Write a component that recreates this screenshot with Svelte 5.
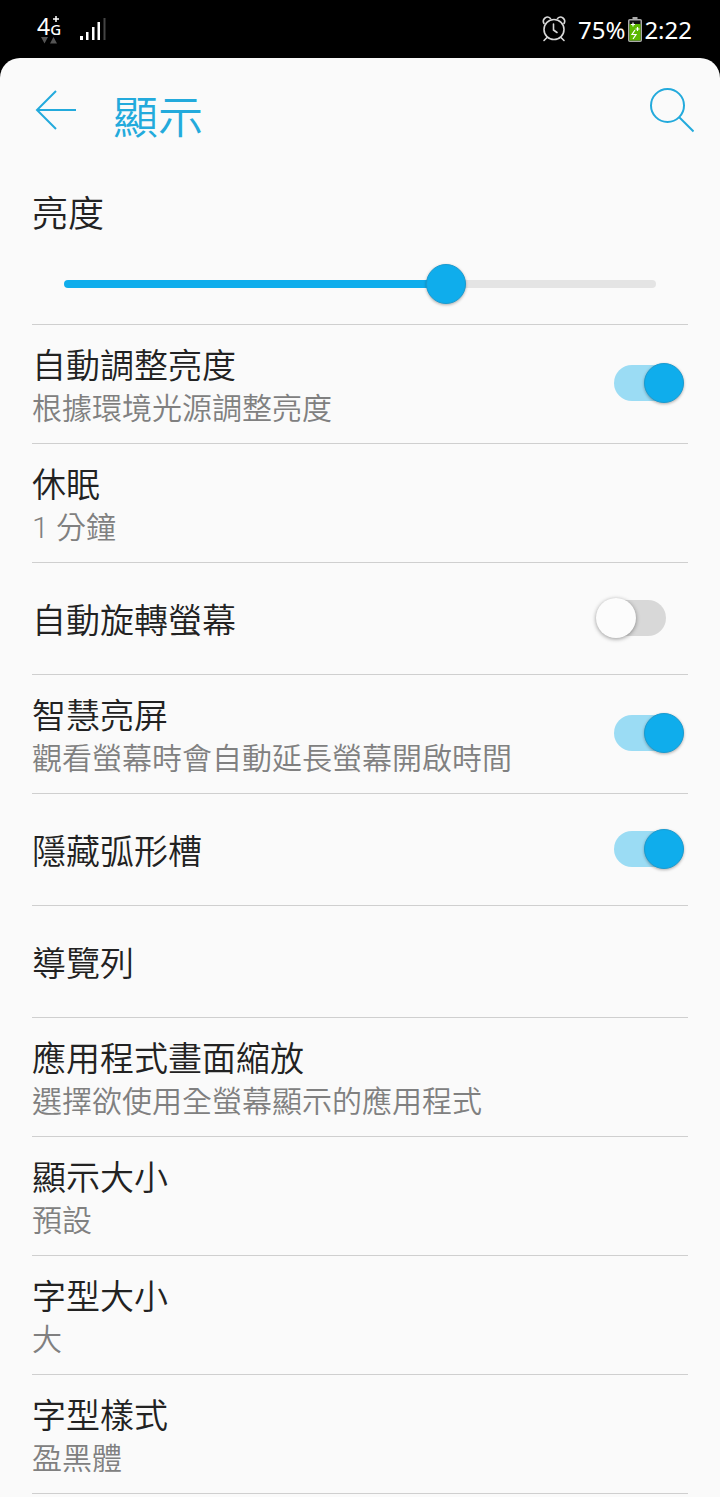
<script lang="ts">
	type Item = {
		title: string;
		sub?: string;
		on?: boolean;
	};

	const max = 255;
	let brightness = $state(167);

	let items: Item[] = $state([
		{ title: '自動調整亮度', sub: '根據環境光源調整亮度', on: true },
		{ title: '休眠', sub: '1 分鐘' },
		{ title: '自動旋轉螢幕', on: false },
		{ title: '智慧亮屏', sub: '觀看螢幕時會自動延長螢幕開啟時間', on: true },
		{ title: '隱藏弧形槽', on: true },
		{ title: '導覽列' },
		{ title: '應用程式畫面縮放', sub: '選擇欲使用全螢幕顯示的應用程式' },
		{ title: '顯示大小', sub: '預設' },
		{ title: '字型大小', sub: '大' },
		{ title: '字型樣式', sub: '盈黑體' }
	]);
</script>

{#snippet text(item: Item)}
	<span class="text">
		<span class="title">{item.title}</span>
		{#if item.sub}
			<span class="sub">{item.sub}</span>
		{/if}
	</span>
{/snippet}

<div class="screen">
	<div class="status">
		<div class="network">
			<div class="type">
				<div class="gen">
					<span>4</span>
					<div class="plus">
						<svg width="6" height="6" viewBox="0 0 6 6" stroke="#fff" stroke-width="1.500">
							<path d="M3 0v6M0 3h6" />
						</svg>
						<span>G</span>
					</div>
				</div>
				<svg width="16" height="7" viewBox="0 0 16 7" fill="#555">
					<path d="M0 0h7L3.500 6.500zM9 6.500h7L12.500 0z" />
				</svg>
			</div>
			<svg width="26" height="24" viewBox="0 0 26 24">
				<path d="M0 19h3v4H0zM6 15h2.500v8H6zM12 10h2.500v13H12zM17.500 5h2.500v18h-2.500z" fill="#fff" />
				<path d="M23.500 1h2v22h-2z" fill="#444" />
			</svg>
		</div>
		<div class="system">
			<svg class="alarm" width="24" height="26" viewBox="0 0 24 26" fill="none" stroke="#d8d8d8" stroke-width="1.600" stroke-linecap="round">
				<circle cx="12" cy="13.500" r="10" />
				<path d="M11.500 8v6l3.500 2.500M5 21.500L2 24.500M19 21.500l3 3" />
				<path d="M2 7.500C-0.500 3 5 -1 8.500 2.500M22 7.500C24.500 3 19 -1 15.500 2.500" />
			</svg>
			<span>75%</span>
			<svg class="battery" width="14" height="25" viewBox="0 0 14 25">
				<path d="M4.500 0h5v2h-5z" fill="#aaa" />
				<rect x="0.750" y="2.750" width="12.500" height="21.500" rx="1" fill="#111" stroke="#aaa" stroke-width="1.500" />
				<path d="M1.500 7h11v16.500h-11z" fill="#5cb800" />
				<path d="M3 7.500h4M5 5.500v4M7.500 12h4M9.500 10v4M7 13L4 17.500h4L5 22" fill="none" stroke="#fff" stroke-width="1.200" />
			</svg>
			<span>2:22</span>
		</div>
	</div>

	<main>
		<header>
			<button class="icon" aria-label="返回">
				<svg width="42" height="42" viewBox="0 0 42 42" fill="none" stroke="#23aadc" stroke-width="2">
					<path d="M21 2L2 21l19 19M2 21h39" />
				</svg>
			</button>
			<h1>顯示</h1>
			<button class="icon" aria-label="搜尋">
				<svg width="44" height="46" viewBox="0 0 44 46" fill="none" stroke="#23aadc" stroke-width="2">
					<circle cx="17.500" cy="18.500" r="16.500" />
					<path d="M29 30L43.500 44.500" />
				</svg>
			</button>
		</header>

		<section class="brightness">
			<label for="brightness">亮度</label>
			<input
				id="brightness"
				type="range"
				min="0"
				{max}
				bind:value={brightness}
				style="--fill: {(brightness / max) * 100}%"
			/>
		</section>

		<ul>
			{#each items as item}
				<li>
					{#if item.on !== undefined}
						<label class="row" class:single={!item.sub}>
							{@render text(item)}
							<input class="switch" type="checkbox" role="switch" bind:checked={item.on} />
						</label>
					{:else}
						<button class="row" class:single={!item.sub}>
							{@render text(item)}
						</button>
					{/if}
				</li>
			{/each}
		</ul>
	</main>
</div>

<style>
	:global(body) {
		background: #fafafa;
	}

	.screen {
		min-height: 100vh;
		background: #000;
		font-family: Roboto, 'Noto Sans CJK TC', sans-serif;
		font-weight: 350;
		color: #222;
	}

	.status {
		display: flex;
		justify-content: space-between;
		height: 58px;
		padding: 0 28px 0 37px;
		box-sizing: border-box;
		color: #fff;
		font-family: 'Noto Sans', sans-serif;
		font-weight: 400;
	}

	.network,
	.system,
	.gen {
		display: flex;
		align-items: center;
	}

	.network {
		gap: 19px;
	}

	.type {
		display: flex;
		flex-direction: column;
		align-items: center;
	}

	.gen {
		font-size: 23px;
		line-height: 22px;
	}

	.plus {
		display: flex;
		flex-direction: column;
		align-items: center;
		font-size: 15px;
		font-weight: 500;
		line-height: 14px;
	}

	.system {
		font-size: 24px;
		line-height: 56px;
	}

	.system span {
		padding-top: 2px;
	}

	.alarm {
		margin-right: 12px;
	}

	.battery {
		margin: 0 2px 0 3px;
	}

	main {
		min-height: calc(100vh - 58px);
		background: #fafafa;
		border-radius: 20px 20px 0 0;
	}

	header {
		display: flex;
		align-items: center;
		height: 104px;
		padding: 0 26px 0 35px;
	}

	button {
		border: 0;
		padding: 0;
		background: none;
		color: inherit;
		font: inherit;
		text-align: left;
		cursor: pointer;
	}

	.icon svg {
		display: block;
	}

	h1 {
		flex: 1;
		margin: 0;
		padding: 17px 0 0 36px;
		color: #23aadc;
		font-size: 45px;
		font-weight: 350;
		line-height: 56px;
	}

	.brightness {
		display: flex;
		flex-direction: column;
		margin: 0 32px;
		padding: 29px 0 20px;
		border-bottom: 1px solid #cfcfcf;
	}

	.brightness label {
		font-size: 36px;
		line-height: 48px;
		margin-bottom: 25px;
	}

	input[type='range'] {
		appearance: none;
		height: 40px;
		margin: 0 32px;
		background: none;
	}

	input[type='range']::-webkit-slider-runnable-track {
		height: 8px;
		border-radius: 4px;
		background: linear-gradient(to right, #0fadec var(--fill), #e4e4e4 var(--fill));
	}

	input[type='range']::-webkit-slider-thumb {
		appearance: none;
		width: 40px;
		height: 40px;
		margin-top: -16px;
		border: 1px solid #1a9bd0;
		border-radius: 50%;
		background: #0fadec;
		box-shadow: 0 1px 3px rgba(0, 0, 0, 0.3);
	}

	ul {
		margin: 0 32px;
		padding: 0;
		list-style: none;
	}

	li {
		border-bottom: 1px solid #cfcfcf;
	}

	.row {
		display: flex;
		align-items: center;
		justify-content: space-between;
		width: 100%;
		box-sizing: border-box;
		padding-right: 4px;
	}

	.text {
		display: flex;
		flex-direction: column;
		padding: 19px 0 13px;
	}

	.single .text {
		padding: 36px 0 31px;
	}

	.title {
		font-size: 34px;
		line-height: 44px;
	}

	.sub {
		color: #808080;
		font-size: 30px;
		line-height: 42px;
	}

	.switch {
		appearance: none;
		position: relative;
		flex: none;
		width: 88px;
		height: 40px;
		margin: 0 0 2px;
	}

	.switch::before {
		content: '';
		position: absolute;
		top: 2px;
		left: 2px;
		width: 68px;
		height: 36px;
		border-radius: 18px;
		background: #d8d8d8;
	}

	.switch::after {
		content: '';
		position: absolute;
		top: 0;
		left: 0;
		width: 40px;
		height: 40px;
		box-sizing: border-box;
		border-radius: 50%;
		background: #fcfcfc;
		box-shadow: 0 1px 4px rgba(0, 0, 0, 0.4);
	}

	.switch:checked::before {
		left: 18px;
		background: #9bdcf4;
	}

	.switch:checked::after {
		left: 48px;
		border: 1px solid #1a9bd0;
		background: #0fadec;
		box-shadow: 0 1px 3px rgba(0, 0, 0, 0.3);
	}
</style>
